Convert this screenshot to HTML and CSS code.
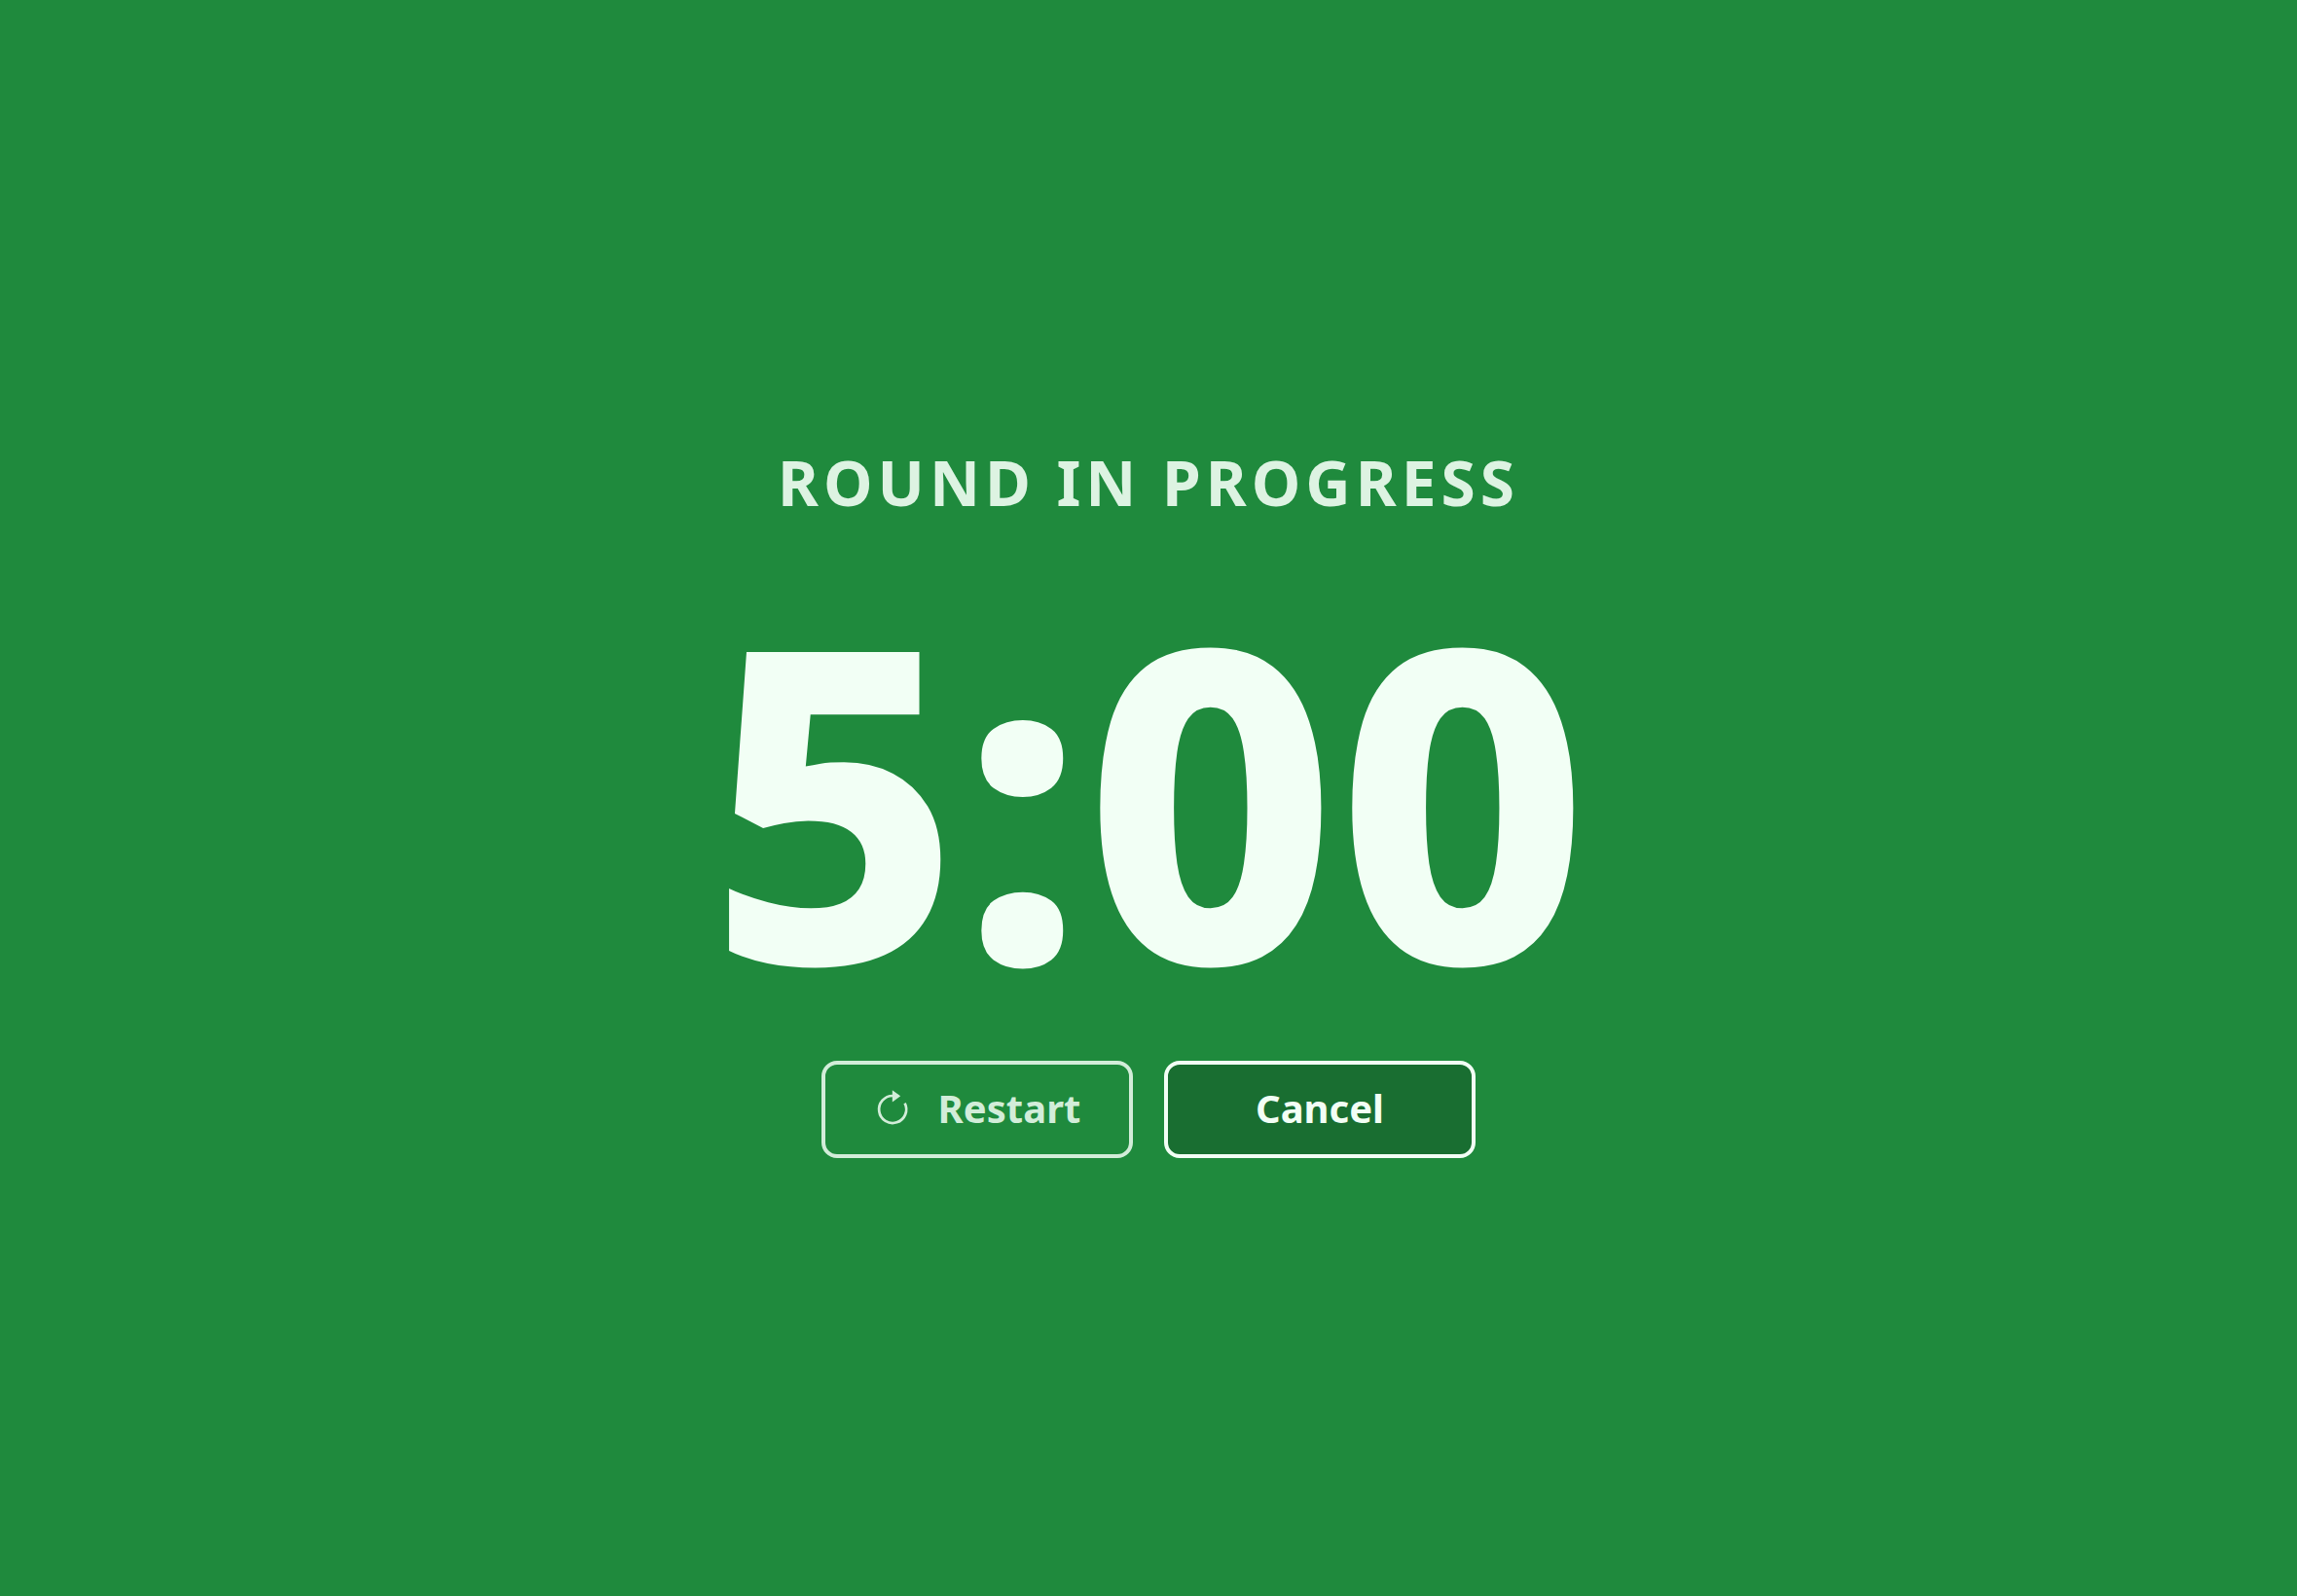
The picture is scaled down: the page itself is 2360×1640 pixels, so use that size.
FILE: index.html
```html
<!DOCTYPE html>
<html lang="en">
<head>
<meta charset="utf-8">
<meta name="viewport" content="width=device-width, initial-scale=1">
<title>Round timer</title>
<link rel="stylesheet" href="styles.css">
</head>
<body>
<main class="timer">
  <h1 class="timer-status">Round in progress</h1>
  <time class="timer-clock" datetime="PT5M">5:00</time>
  <div class="timer-actions">
    <button class="button button-outline" type="button">
      <svg class="button-icon" viewBox="0 0 40 40" aria-hidden="true">
        <path d="M19.5 7 A14 14 0 1 0 31.6 14.6" fill="none" stroke="currentColor" stroke-width="2.7"/>
        <path d="M18.8 1.2 L27.2 7.2 L18.8 13.4 Z" fill="currentColor"/>
      </svg>
      Restart
    </button>
    <button class="button button-solid" type="button">Cancel</button>
  </div>
</main>
</body>
</html>
```
FILE: styles.css
```css
* {
  box-sizing: border-box;
}

body {
  margin: 0;
  background: #1f8a3d;
  color: #f2fff5;
  font-family: "Noto Sans", sans-serif;
}

.timer {
  display: flex;
  flex-direction: column;
  align-items: center;
  justify-content: center;
  min-height: 100vh;
}

.timer-status {
  margin: 0 0 50px;
  color: #ddf3e2;
  font-size: 64px;
  font-weight: 700;
  line-height: 92px;
  letter-spacing: 5px;
  text-transform: uppercase;
}

.timer-clock {
  font-size: 448px;
  font-weight: 800;
  line-height: 448px;
}

.timer-actions {
  display: flex;
  gap: 32px;
  margin-top: 50px;
}

.button {
  display: flex;
  align-items: center;
  justify-content: center;
  gap: 26px;
  width: 320px;
  height: 100px;
  padding: 0 32px 2px;
  border: 4px solid #f2fff5;
  border-radius: 16px;
  font-family: inherit;
  font-size: 40px;
  font-weight: 700;
  line-height: 56px;
}

.button-icon {
  flex: none;
  width: 40px;
  height: 40px;
}

.button-outline {
  border-color: #d2edd9;
  background: transparent;
  color: #d2edd9;
}

.button-solid {
  background: #196e31;
  color: #f2fff5;
}
```
